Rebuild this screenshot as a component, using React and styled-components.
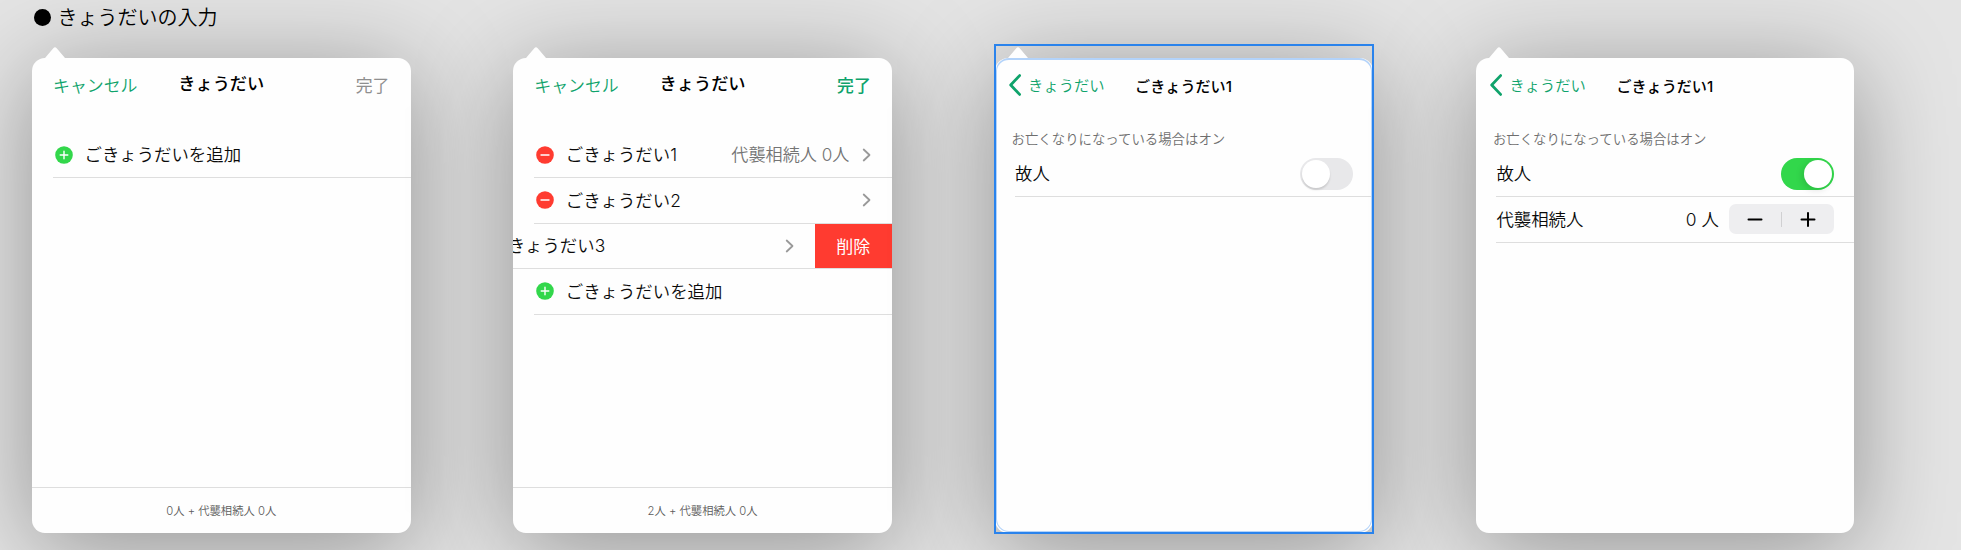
import React from "react";
import styled, { createGlobalStyle, css } from "styled-components";

const Global = createGlobalStyle`
  * { box-sizing: border-box; }
  body { margin: 0; background: #fff; font-family: Inter, "Noto Sans CJK JP", sans-serif; font-weight: 350; color: #0a0a0a; }
`;

const Board = styled.main`
  width: 1961px;
  height: 550px;
  background: #e4e4e4;
  overflow: hidden;
`;

const Heading = styled.h1`
  display: flex;
  align-items: center;
  gap: 6.5px;
  height: 34px;
  margin: 0;
  padding-left: 34px;
  font-size: 20px;
  font-weight: 350;
  line-height: 34px;
  color: #000;
  white-space: nowrap;

  & > span:last-child {
    padding-top: 1px;
  }
`;

const Dot = styled.span`
  width: 17px;
  height: 17px;
  border-radius: 50%;
  background: #000;
`;

const Cards = styled.div`
  display: flex;
  gap: 102.8px;
  padding: 24px 0 0 32px;
`;

const Card = styled.section`
  position: relative;
  flex: none;
  display: flex;
  flex-direction: column;
  width: 378.5px;
  height: 475px;
  border-radius: 13px;
  background: #fefefe;
  box-shadow: 0 14px 98px rgba(0, 0, 0, 0.36);
`;

const Arrow = styled.svg`
  position: absolute;
  left: 12px;
  top: -12px;
  width: 22px;
  height: 13px;
`;

const SelectedFrame = styled.div`
  position: absolute;
  left: -1px;
  top: -14px;
  width: 380px;
  height: 490px;
  border: 2px solid #2a83ec;
`;

const SelectedEdge = styled.div`
  position: absolute;
  inset: 0 1px 1px 1px;
  border: 1px solid #b3d3fa;
  border-top-width: 2px;
  border-radius: 13px;
`;

const Nav = styled.header`
  display: grid;
  grid-template-columns: 1fr auto 1fr;
  align-items: center;
  height: 54px;
  padding: 1px 21px 0 21px;
  font-size: 16.9px;
  line-height: 24px;
`;

const NavTitle = styled.h2`
  margin: 0;
  padding-bottom: 4px;
  font-size: 17.2px;
  font-weight: 500;
  color: #000;
`;

const NavButton = styled.span`
  color: ${(p) => (p.$muted ? "#8f8f8f" : "#0fa36b")};
  font-weight: ${(p) => (p.$strong ? 500 : p.$muted ? 400 : 350)};
  justify-self: ${(p) => (p.$end ? "end" : "start")};
`;

const DetailNav = styled.header`
  display: flex;
  align-items: center;
  height: 54px;
  padding-left: 14px;
  font-size: 15.3px;
`;

const Back = styled.span`
  display: flex;
  align-items: center;
  width: 126.5px;
  gap: 7.5px;
  color: #0fa36b;

  & > span {
    padding-bottom: 2px;
  }
`;

const DetailTitle = styled.h2`
  margin: 0;
  font-size: 15.1px;
  font-weight: 500;
  color: #000;
`;

const Body = styled.div`
  flex: 1;
  min-height: 0;
  padding-top: 20.6px;
  overflow: hidden;
`;

const Hint = styled.p`
  margin: 0;
  height: 38px;
  padding: 14px 0 0 17px;
  font-size: 13.4px;
  line-height: 22px;
  color: #6e6e6e;
`;

const Row = styled.div`
  display: flex;
  align-items: center;
  height: 45.5px;
  margin-left: ${(p) => (p.$swiped ? 0 : "20.5px")};
  padding-right: ${(p) => (p.$swiped ? 0 : "20.5px")};
  border-bottom: 1px solid #dedede;
  font-size: 17.4px;
  white-space: nowrap;
  ${(p) =>
    p.$swiped &&
    css`
      overflow: hidden;
    `}
`;

const Swiped = styled.div`
  display: flex;
  align-items: center;
  justify-content: space-between;
  flex: 1;
  min-width: 0;
  padding-right: 21px;
`;

const Clipped = styled.span`
  margin-left: -23px;
  padding-bottom: 2px;
`;

const Badge = styled.svg`
  flex: none;
  width: 18px;
  height: 18px;
  margin: 0 12px 0 2px;
`;

const Label = styled.span`
  flex: 1;
  padding-bottom: 2px;
`;

const Detail = styled.span`
  margin-right: 12.5px;
  padding-bottom: 2px;
  font-size: 17.1px;
  color: #747474;
`;

const Count = styled.span`
  margin-right: 10px;
  padding-bottom: 2px;
`;

const ChevronIcon = styled.svg`
  flex: none;
  width: 9px;
  height: 14px;
  margin-right: ${(p) => (p.$flush ? 0 : "0.5px")};
`;

const DeleteAction = styled.span`
  display: flex;
  align-items: center;
  justify-content: center;
  width: 77px;
  height: 100%;
  padding-bottom: 1px;
  background: #ff3b30;
  color: #fff;
  font-size: 17px;
  font-weight: 400;
`;

const Switch = styled.span`
  display: flex;
  justify-content: ${(p) => (p.$on ? "flex-end" : "flex-start")};
  width: 53px;
  height: 32px;
  padding: 2px;
  border-radius: 16px;
  background: ${(p) => (p.$on ? "#32d74b" : "#e8e8ea")};
`;

const Knob = styled.span`
  width: 28px;
  height: 28px;
  border-radius: 50%;
  background: #fff;
  box-shadow: ${(p) => (p.$on ? "-2px 2px 7px" : "0 2px 2px")} rgba(0, 0, 0, 0.13);
`;

const Stepper = styled.span`
  display: flex;
  align-items: center;
  width: 105px;
  height: 30px;
  border-radius: 7px;
  background: #eeeef0;
`;

const StepperHalf = styled.svg`
  flex: 1;
  height: 15px;
  & + & {
    border-left: 1px solid #d0d0d2;
  }
`;

const Footer = styled.footer`
  height: 46px;
  border-top: 1px solid #dedede;
  font-size: 11.3px;
  line-height: 47px;
  text-align: center;
  color: #5c5c5c;
`;

const Chevron = ({ flush }) => (
  <ChevronIcon $flush={flush} viewBox="0 0 9 14">
    <path d="M1.7 1.5 7.5 7l-5.8 5.5" fill="none" stroke="#999" strokeWidth="1.8" strokeLinecap="round" strokeLinejoin="round" />
  </ChevronIcon>
);

const CircleIcon = ({ add }) => (
  <Badge viewBox="0 0 18 18">
    <circle cx="9" cy="9" r="8.8" fill={add ? "#32d74b" : "#ff3b30"} />
    <path d={add ? "M5.2 9h7.6M9 5.2v7.6" : "M5 9h8"} stroke="#fff" strokeWidth="1.4" strokeLinecap="round" />
  </Badge>
);

const Popover = ({ children }) => (
  <Card>
    <Arrow viewBox="0 0 22 13">
      <path d="M0 13 1 12 9.3 2.2Q11 .2 12.7 2.2L21 12l1 1Z" fill="#fefefe" />
    </Arrow>
    {children}
  </Card>
);

const ListNav = ({ done }) => (
  <Nav>
    <NavButton>キャンセル</NavButton>
    <NavTitle>きょうだい</NavTitle>
    <NavButton $end $strong={done} $muted={!done}>完了</NavButton>
  </Nav>
);

const PersonNav = () => (
  <DetailNav>
    <Back>
      <svg width="12" height="22" viewBox="0 0 12 22">
        <path d="M10.6 1.6 1.7 11l8.9 9.4" fill="none" stroke="#0fa36b" strokeWidth="2.8" strokeLinecap="round" strokeLinejoin="round" />
      </svg>
      <span>きょうだい</span>
    </Back>
    <DetailTitle>ごきょうだい1</DetailTitle>
  </DetailNav>
);

const AddRow = () => (
  <Row>
    <CircleIcon add />
    <Label>ごきょうだいを追加</Label>
  </Row>
);

const DeceasedRow = ({ on }) => (
  <>
    <Hint>お亡くなりになっている場合はオン</Hint>
    <Row>
      <Label>故人</Label>
      <Switch $on={on}>
        <Knob $on={on} />
      </Switch>
    </Row>
  </>
);

const DetailBody = styled(Body)`
  padding-top: 1.6px;
`;

export default function App() {
  return (
    <>
      <Global />
      <Board>
        <Heading>
          <Dot />
          <span>きょうだいの入力</span>
        </Heading>
        <Cards>
          <Popover>
            <ListNav />
            <Body>
              <AddRow />
            </Body>
            <Footer>0人 + 代襲相続人 0人</Footer>
          </Popover>

          <Popover>
            <ListNav done />
            <Body>
              <Row>
                <CircleIcon />
                <Label>ごきょうだい1</Label>
                <Detail>代襲相続人 0人</Detail>
                <Chevron />
              </Row>
              <Row>
                <CircleIcon />
                <Label>ごきょうだい2</Label>
                <Chevron />
              </Row>
              <Row $swiped>
                <Swiped>
                  <Clipped>ごきょうだい3</Clipped>
                  <Chevron flush />
                </Swiped>
                <DeleteAction>削除</DeleteAction>
              </Row>
              <AddRow />
            </Body>
            <Footer>2人 + 代襲相続人 0人</Footer>
          </Popover>

          <Popover>
            <PersonNav />
            <DetailBody>
              <DeceasedRow />
            </DetailBody>
            <SelectedEdge />
            <SelectedFrame />
          </Popover>

          <Popover>
            <PersonNav />
            <DetailBody>
              <DeceasedRow on />
              <Row>
                <Label>代襲相続人</Label>
                <Count>0 人</Count>
                <Stepper>
                  <StepperHalf viewBox="0 0 52 15">
                    <path d="M19.5 7.5h13" stroke="#000" strokeWidth="2" strokeLinecap="round" />
                  </StepperHalf>
                  <StepperHalf viewBox="0 0 52 15">
                    <path d="M19.5 7.5h13M26 1v13" stroke="#000" strokeWidth="2" strokeLinecap="round" />
                  </StepperHalf>
                </Stepper>
              </Row>
            </DetailBody>
          </Popover>
        </Cards>
      </Board>
    </>
  );
}
